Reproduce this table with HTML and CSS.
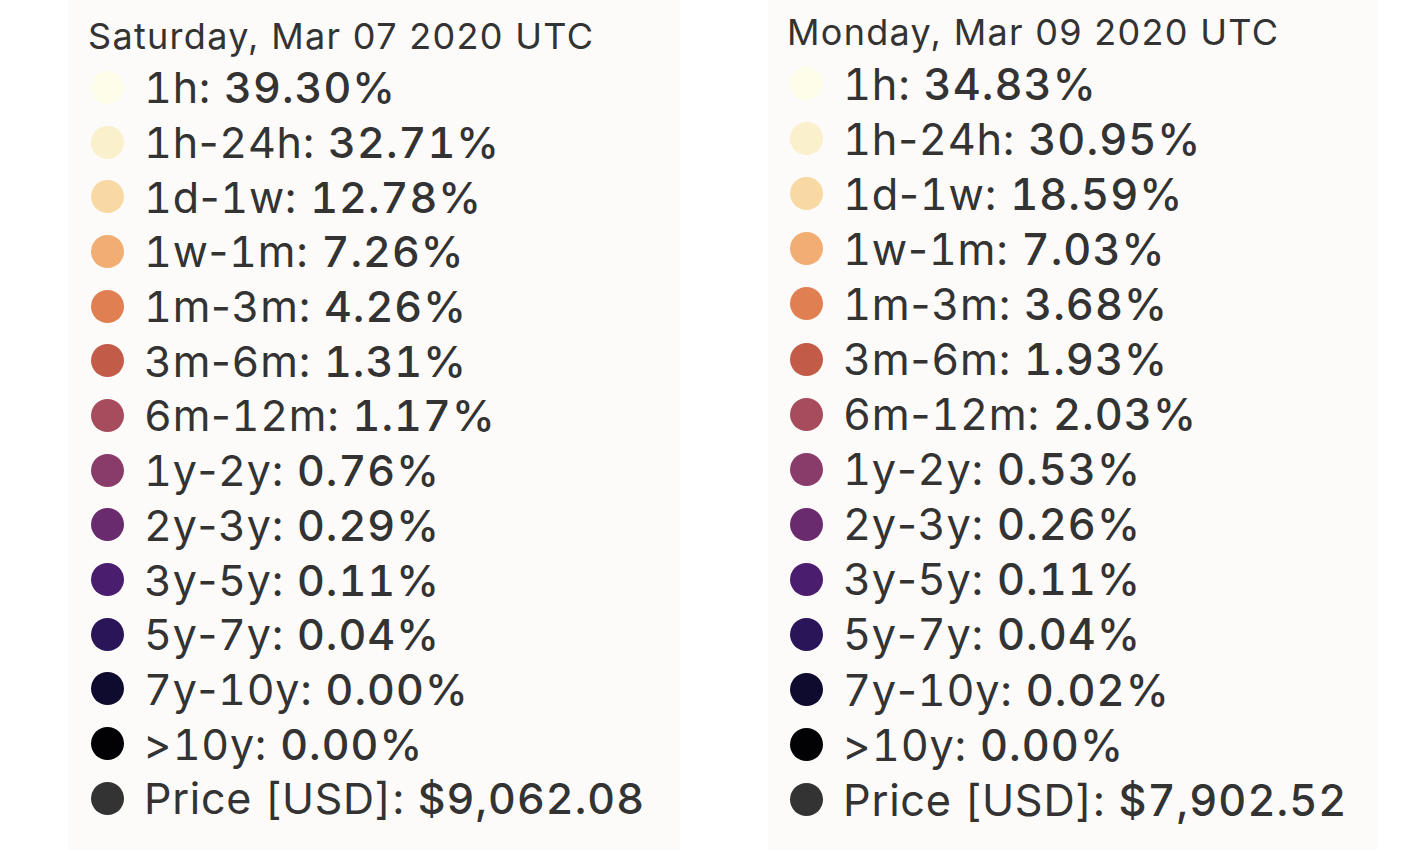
FILE: index.html
```html
<!DOCTYPE html>
<html lang="en">
<head>
<meta charset="utf-8">
<title>Tooltips</title>
<link rel="stylesheet" href="styles.css">
</head>
<body>
<main class="pair">
  <section class="tip tip-left">
    <h2 class="tip-title">Saturday, Mar 07 2020 UTC</h2>
    <ul class="rows">
      <li class="row"><span class="dot c1"></span><span class="lbl">1h:</span><b class="val">39.30%</b></li>
      <li class="row"><span class="dot c2"></span><span class="lbl">1h<i class="hy">-</i>24h:</span><b class="val">32.71%</b></li>
      <li class="row"><span class="dot c3"></span><span class="lbl">1d<i class="hy">-</i>1w:</span><b class="val">12.78%</b></li>
      <li class="row"><span class="dot c4"></span><span class="lbl">1w<i class="hy">-</i>1m:</span><b class="val">7.26%</b></li>
      <li class="row"><span class="dot c5"></span><span class="lbl">1m<i class="hy">-</i>3m:</span><b class="val">4.26%</b></li>
      <li class="row"><span class="dot c6"></span><span class="lbl">3m<i class="hy">-</i>6m:</span><b class="val">1.31%</b></li>
      <li class="row"><span class="dot c7"></span><span class="lbl">6m<i class="hy">-</i>12m:</span><b class="val">1.17%</b></li>
      <li class="row"><span class="dot c8"></span><span class="lbl">1y<i class="hy">-</i>2y:</span><span class="num">0.76%</span></li>
      <li class="row"><span class="dot c9"></span><span class="lbl">2y<i class="hy">-</i>3y:</span><span class="num">0.29%</span></li>
      <li class="row"><span class="dot c10"></span><span class="lbl">3y<i class="hy">-</i>5y:</span><span class="num">0.11%</span></li>
      <li class="row"><span class="dot c11"></span><span class="lbl">5y<i class="hy">-</i>7y:</span><span class="num">0.04%</span></li>
      <li class="row"><span class="dot c12"></span><span class="lbl">7y<i class="hy">-</i>10y:</span><span class="num">0.00%</span></li>
      <li class="row"><span class="dot c13"></span><span class="lbl">&gt;10y:</span><span class="num">0.00%</span></li>
      <li class="row"><span class="dot c14"></span><span class="lbl">Price [USD]:</span><b class="val">$9,062.08</b></li>
    </ul>
  </section>
  <section class="tip tip-right">
    <h2 class="tip-title">Monday, Mar 09 2020 UTC</h2>
    <ul class="rows">
      <li class="row"><span class="dot c1"></span><span class="lbl">1h:</span><b class="val">34.83%</b></li>
      <li class="row"><span class="dot c2"></span><span class="lbl">1h<i class="hy">-</i>24h:</span><b class="val">30.95%</b></li>
      <li class="row"><span class="dot c3"></span><span class="lbl">1d<i class="hy">-</i>1w:</span><b class="val">18.59%</b></li>
      <li class="row"><span class="dot c4"></span><span class="lbl">1w<i class="hy">-</i>1m:</span><b class="val">7.03%</b></li>
      <li class="row"><span class="dot c5"></span><span class="lbl">1m<i class="hy">-</i>3m:</span><b class="val">3.68%</b></li>
      <li class="row"><span class="dot c6"></span><span class="lbl">3m<i class="hy">-</i>6m:</span><b class="val">1.93%</b></li>
      <li class="row"><span class="dot c7"></span><span class="lbl">6m<i class="hy">-</i>12m:</span><b class="val">2.03%</b></li>
      <li class="row"><span class="dot c8"></span><span class="lbl">1y<i class="hy">-</i>2y:</span><span class="num">0.53%</span></li>
      <li class="row"><span class="dot c9"></span><span class="lbl">2y<i class="hy">-</i>3y:</span><span class="num">0.26%</span></li>
      <li class="row"><span class="dot c10"></span><span class="lbl">3y<i class="hy">-</i>5y:</span><span class="num">0.11%</span></li>
      <li class="row"><span class="dot c11"></span><span class="lbl">5y<i class="hy">-</i>7y:</span><span class="num">0.04%</span></li>
      <li class="row"><span class="dot c12"></span><span class="lbl">7y<i class="hy">-</i>10y:</span><span class="num">0.02%</span></li>
      <li class="row"><span class="dot c13"></span><span class="lbl">&gt;10y:</span><span class="num">0.00%</span></li>
      <li class="row"><span class="dot c14"></span><span class="lbl">Price [USD]:</span><b class="val">$7,902.52</b></li>
    </ul>
  </section>
</main>
</body>
</html>
```
FILE: styles.css
```css
* { box-sizing: border-box; }
html, body { margin: 0; padding: 0; background: #ffffff; }
body {
  width: 1408px;
  height: 852px;
  overflow: hidden;
  font-family: Inter, "Liberation Sans", sans-serif;
  color: #333333;
}
.pair {
  display: flex;
  align-items: flex-start;
  padding-left: 68px;
  gap: 88px;
}
.tip {
  background: #fcfbf9;
  height: 850px;
  padding: 14px 0 0 20px;
}
.tip-left { width: 612px; }
.tip-right { width: 610px; padding-top: 10px; padding-left: 19px; }
.tip-title {
  margin: 0 0 2px;
  font-size: 36px;
  font-weight: 400;
  line-height: 44px;
  letter-spacing: 1.3px;
  color: #333;
}
.rows {
  list-style: none;
  margin: 0;
  padding: 0;
}
.row {
  display: flex;
  align-items: center;
  height: 54.7px;
  font-size: 43px;
  white-space: pre;
  font-variant-numeric: tabular-nums;
}
.tip-right .row { height: 55.1px; font-size: 43.3px; }
.dot {
  width: 33px;
  height: 33px;
  border-radius: 50%;
  margin: 0 20px 0 3px;
  flex: none;
}
.lbl { font-weight: 400; margin-right: 13px; letter-spacing: 0.75px; }
.hy { font-style: normal; font-variant-numeric: normal; }
.val, .num { font-weight: 500; letter-spacing: 1.05px; }
.c1 { background: #fdfde9; }
.c2 { background: #fbf0cc; }
.c3 { background: #f8d9a3; }
.c4 { background: #f1ad72; }
.c5 { background: #df7f52; }
.c6 { background: #c25c49; }
.c7 { background: #a74c5d; }
.c8 { background: #893c6a; }
.c9 { background: #692b6e; }
.c10 { background: #4a1d6e; }
.c11 { background: #291558; }
.c12 { background: #0f0b2e; }
.c13 { background: #020104; }
.c14 { background: #333333; }
```
